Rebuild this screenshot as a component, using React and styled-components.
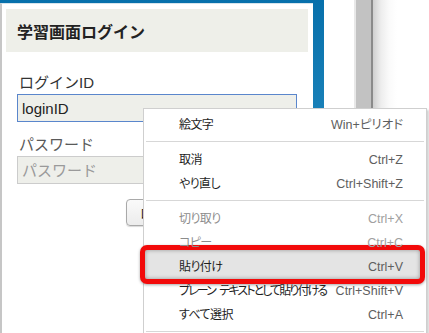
import React from 'react';
import styled, { createGlobalStyle } from 'styled-components';

const GlobalStyle = createGlobalStyle`
  html, body {
    margin: 0;
    padding: 0;
    background: #fff;
  }
  body {
    font-family: "Liberation Sans", "Noto Sans CJK JP", sans-serif;
  }
`;

const menuItems = [
  { label: '絵文字', key: 'Win+ピリオド' },
  { sep: true },
  { label: '取消', key: 'Ctrl+Z' },
  { label: 'やり直し', key: 'Ctrl+Shift+Z' },
  { sep: true },
  { label: '切り取り', key: 'Ctrl+X', disabled: true },
  { label: 'コピー', key: 'Ctrl+C', disabled: true },
  { label: '貼り付け', key: 'Ctrl+V', active: true },
  { label: 'プレーン テキストとして貼り付ける', key: 'Ctrl+Shift+V', long: true },
  { label: 'すべて選択', key: 'Ctrl+A' },
  { sep: true },
];

const App = () => {
  return (
    <>
      <GlobalStyle />
      <Screen>
        <Frame>
          <Panel>
            <PanelHeader>学習画面ログイン</PanelHeader>
            <Form>
              <Label>ログインID</Label>
              <Field $focused defaultValue="loginID" />
              <Label $gap>パスワード</Label>
              <Field type="password" placeholder="パスワード" />
              <ButtonRow>
                <LoginButton>ログイン</LoginButton>
              </ButtonRow>
            </Form>
          </Panel>
        </Frame>
        <Gutter />
        <Scrollbar />
        <ShadowEdge />

        <Menu>
          {menuItems.map((item, i) =>
            item.sep ? (
              <Separator key={i} />
            ) : (
              <Item key={i} $disabled={item.disabled}>
                {item.active && <Highlight />}
                <ItemLabel $long={item.long}>{item.label}</ItemLabel>
                <Shortcut $disabled={item.disabled}>{item.key}</Shortcut>
              </Item>
            )
          )}
        </Menu>
      </Screen>
    </>
  );
};

export default App;

// styles

const Screen = styled.div`
  position: relative;
  width: 429px;
  height: 333px;
  overflow: hidden;
  display: flex;
  background: #fff;
`;

const Frame = styled.div`
  width: 324px;
  flex-shrink: 0;
  box-sizing: border-box;
  padding: 3px 11px 0 0;
  background: linear-gradient(to bottom, #0770ab 0%, #1f86bc 45%, #2f95c6 100%);
`;

const Panel = styled.div`
  height: 100%;
  box-sizing: border-box;
  background: #fff;
  border-left: 2px solid #c6c6c6;
  border-top: 1px solid #d6e4ec;
  padding: 5px 5px 0 4px;
`;

const PanelHeader = styled.div`
  height: 43px;
  background: #eeefe9;
  padding-left: 11px;
  display: flex;
  align-items: center;
  font-family: "Noto Sans CJK JP", sans-serif;
  font-weight: bold;
  font-size: 16px;
  color: #222;
`;

const Form = styled.div`
  display: flex;
  flex-direction: column;
  padding: 21px 11px 0 11px;
`;

const Label = styled.div`
  font-family: "Liberation Sans", "Noto Sans CJK JP", sans-serif;
  font-size: 15px;
  line-height: 20px;
  color: ${p => (p.$gap ? '#5a5a5a' : '#333')};
  padding-left: 2px;
  margin-top: ${p => (p.$gap ? '13px' : '0')};
  margin-bottom: 1px;
`;

const Field = styled.input`
  width: 280px;
  height: 28px;
  box-sizing: border-box;
  margin: 0;
  padding: 0 4px;
  background: #eeefea;
  border: 1px solid ${p => (p.$focused ? '#5a86cc' : '#cccccc')};
  border-radius: 0;
  outline: none;
  font-family: "Liberation Sans", "Noto Sans CJK JP", sans-serif;
  font-size: 15px;
  color: #222;

  &::placeholder {
    color: #9a9a9a;
  }
`;

const ButtonRow = styled.div`
  display: flex;
  justify-content: flex-start;
  padding-left: 109px;
  margin-top: 15px;
`;

const LoginButton = styled.button`
  height: 27px;
  padding: 0 13px;
  border: 1px solid #a9a9a9;
  border-radius: 4px;
  background: linear-gradient(#fafafa, #ececec);
  box-shadow: 0 1px 1px rgba(0, 0, 0, 0.15);
  font-family: "Noto Sans CJK JP", sans-serif;
  font-size: 13px;
  color: #222;
`;

const Gutter = styled.div`
  width: 30px;
  flex-shrink: 0;
  background: #fff;
`;

const Scrollbar = styled.div`
  width: 15px;
  flex-shrink: 0;
  background: #c2c2c2;
  border-left: 2px solid #e8e8e8;
  border-right: 2px solid #8a8a8a;
`;

const ShadowEdge = styled.div`
  flex: 1;
  background: linear-gradient(to right, #cfcfcf 0px, #ededed 8px, #fafafa 16px, #fff 24px);
`;

const Menu = styled.div`
  position: absolute;
  left: 143px;
  top: 108px;
  width: 284px;
  box-sizing: border-box;
  padding-top: 3px;
  padding-bottom: 20px;
  background: #fff;
  border: 1px solid #cfcfcf;
  box-shadow: 2px 2px 2px rgba(0, 0, 0, 0.18);
  z-index: 5;
`;

const Item = styled.div`
  position: relative;
  height: 24px;
  display: flex;
  align-items: center;
  justify-content: space-between;
  padding: 1px 23px 0 35px;
  box-sizing: border-box;
  font-family: "Liberation Sans", "Noto Sans CJK JP", sans-serif;
  font-feature-settings: "palt";
  font-size: 12px;
  line-height: 16px;
  color: ${p => (p.$disabled ? '#8c8c8c' : '#1e1e1e')};
`;

const ItemLabel = styled.span`
  position: relative;
  z-index: 2;
  white-space: nowrap;
  letter-spacing: ${p => (p.$long ? '-1.9px' : '-0.6px')};
  word-spacing: ${p => (p.$long ? '3px' : '0')};
`;

const Shortcut = styled.span`
  position: relative;
  z-index: 2;
  white-space: nowrap;
  font-size: 12.5px;
  color: ${p => (p.$disabled ? '#a0a0a0' : '#5e5e5e')};
`;

const Highlight = styled.div`
  position: absolute;
  left: -4px;
  right: 1px;
  top: -9px;
  bottom: -6px;
  z-index: 1;
  border: 5px solid #f20a0a;
  border-radius: 7px;
  background: #e4e4e4;
  box-shadow: inset 0 0 4px rgba(0, 0, 0, 0.35), 0 1px 3px rgba(0, 0, 0, 0.35);
`;

const Separator = styled.div`
  height: 1px;
  margin: 5px 2px;
  background: #d7d7d7;
`;
